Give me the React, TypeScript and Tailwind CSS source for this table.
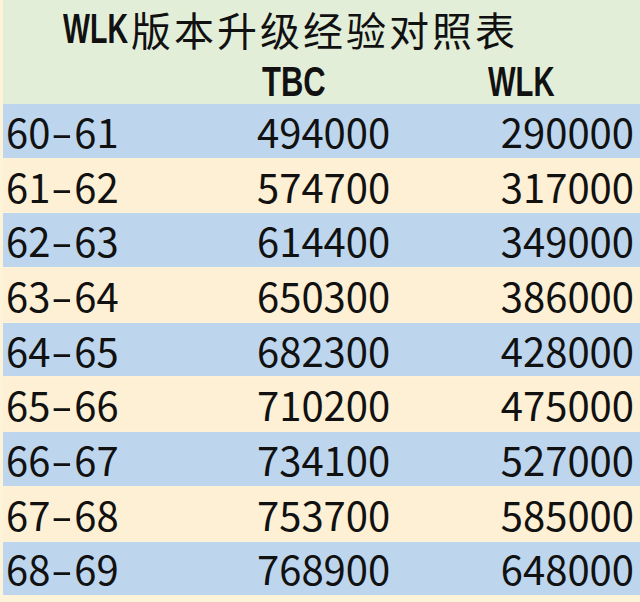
const rows = [
  ["60", "61", "494000", "290000"],
  ["61", "62", "574700", "317000"],
  ["62", "63", "614400", "349000"],
  ["63", "64", "650300", "386000"],
  ["64", "65", "682300", "428000"],
  ["65", "66", "710200", "475000"],
  ["66", "67", "734100", "527000"],
  ["67", "68", "753700", "585000"],
  ["68", "69", "768900", "648000"],
];

export default function App() {
  return (
    <div className="w-[640px] h-[602px] overflow-hidden bg-[#fdf3d8] pl-[3px] font-['Noto_Sans_CJK_SC',sans-serif] text-[#111]">
      <div className="bg-[#e3eed9] h-[104px] flex flex-col">
        <div className="h-[55px] flex items-center pl-[60px] pt-[2px]">
          <span className="w-[68px] inline-block">
            <span className="text-[42px] leading-none font-bold font-['Liberation_Sans',sans-serif] scale-x-[0.68] origin-left inline-block">
              WLK
            </span>
          </span>
          <span className="text-[40px] leading-none tracking-[3px]">
            版本升级经验对照表
          </span>
        </div>
        <div className="flex-1 flex items-center pt-[4px]">
          <span className="ml-[259px] w-[226px] inline-block">
            <span className="text-[43px] leading-none font-bold font-['Liberation_Sans',sans-serif] scale-x-[0.72] origin-left inline-block">
              TBC
            </span>
          </span>
          <span className="text-[43px] leading-none font-bold font-['Liberation_Sans',sans-serif] scale-x-[0.68] origin-left inline-block">
            WLK
          </span>
        </div>
      </div>
      <div className="flex flex-col gap-[1px]">
        {rows.map((r, i) => (
          <div
            key={r[0]}
            className={`h-[53.7px] flex items-center text-[40px] leading-none ${
              i % 2 === 0 ? "bg-[#bdd6ee]" : "bg-[#fdf0d4]"
            }`}
          >
            <span className="w-[254px] pl-[3px]">
              {r[0]}
              <span className="inline-block scale-x-[1.6] mx-[5px]">-</span>
              {r[1]}
            </span>
            <span className="w-[140px]">{r[2]}</span>
            <span className="flex-1 text-right pr-[6px]">{r[3]}</span>
          </div>
        ))}
      </div>
    </div>
  );
}
